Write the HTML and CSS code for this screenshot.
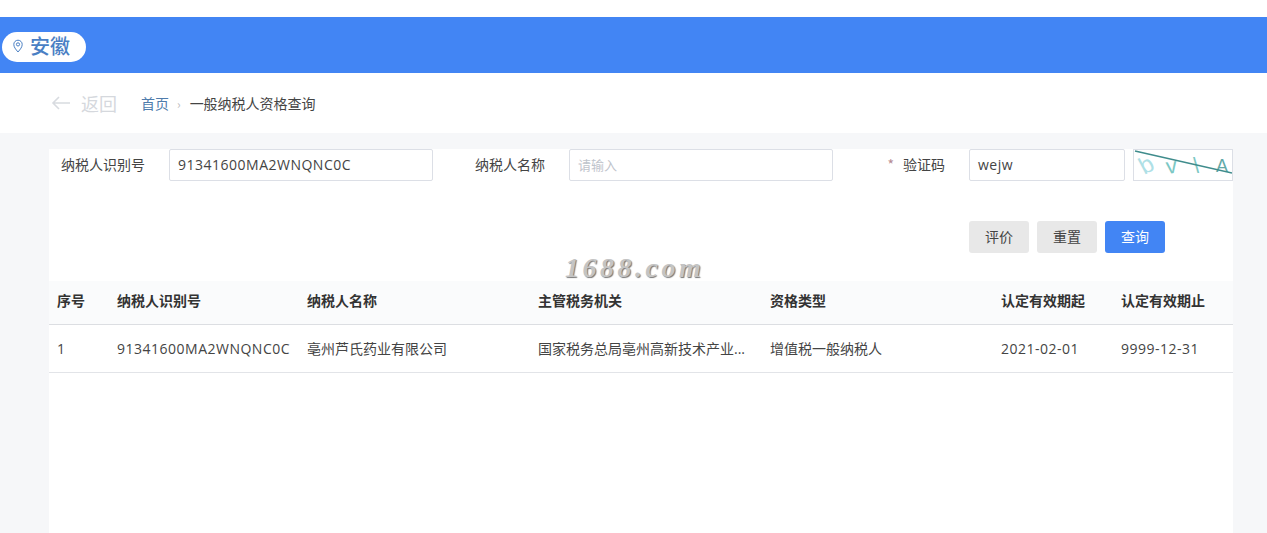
FILE: index.html
```html
<!DOCTYPE html>
<html>
<head>
  <title>一般纳税人资格查询</title>
  <meta charset="utf-8" />
  <link rel="stylesheet" href="styles.css">
</head>
<body>
<div class="header">
  <div class="region">
    <svg class="pin" width="12" height="14" viewBox="0 0 12 14" fill="none" stroke="#4a7fc4" stroke-width="1">
      <path d="M6 13C3.6 10.2 1.8 8 1.8 5.4a4.2 4.2 0 0 1 8.4 0C10.2 8 8.4 10.2 6 13z"/>
      <circle cx="6" cy="5.4" r="1.6"/>
    </svg>
    <span>安徽</span>
  </div>
</div>
<div class="crumbs">
  <div class="back">
    <svg width="20" height="14" viewBox="0 0 20 14" fill="none" stroke="#d8dbe0" stroke-width="1.6">
      <path d="M19 7H2M8 1L2 7l6 6"/>
    </svg>
    <span>返回</span>
  </div>
  <a class="home">首页</a>
  <span class="sep">›</span>
  <span class="current">一般纳税人资格查询</span>
</div>
<div class="page">
  <div class="panel">
    <div class="form">
      <label class="lbl lbl-first">纳税人识别号</label>
      <div class="input">91341600MA2WNQNC0C</div>
      <label class="lbl lbl-second">纳税人名称</label>
      <div class="input placeholder">请输入</div>
      <label class="lbl lbl-third"><em>*</em>验证码</label>
      <div class="input">wejw</div>
      <div class="captcha">
        <svg width="98" height="30" viewBox="0 0 98 30">
          <text x="6" y="22" class="cap cap-a" transform="rotate(-28 14 15)">b</text>
          <text x="32" y="23" class="cap cap-b" transform="rotate(-8 39 16)">v</text>
          <text x="59" y="23" class="cap cap-b">\</text>
          <text x="82" y="22" class="cap cap-c">A</text>
          <path d="M1 1L98 23" stroke="#3f8c8c" stroke-width="1.6" fill="none"/>
        </svg>
      </div>
    </div>
    <div class="actions">
      <button class="btn">评价</button>
      <button class="btn">重置</button>
      <button class="btn primary">查询</button>
    </div>
    <table class="grid">
      <colgroup>
        <col class="c1"><col class="c2"><col class="c3"><col class="c4"><col class="c5"><col class="c6"><col class="c7">
      </colgroup>
      <thead>
        <tr><th>序号</th><th>纳税人识别号</th><th>纳税人名称</th><th>主管税务机关</th><th>资格类型</th><th>认定有效期起</th><th>认定有效期止</th></tr>
      </thead>
      <tbody>
        <tr><td>1</td><td class="num">91341600MA2WNQNC0C</td><td>亳州芦氏药业有限公司</td><td>国家税务总局亳州高新技术产业...</td><td>增值税一般纳税人</td><td class="num">2021-02-01</td><td class="num">9999-12-31</td></tr>
      </tbody>
    </table>
    <div class="mark">1688.com</div>
  </div>
</div>
</body>
</html>
```

FILE: styles.css
```css
html, body {
  height: 100%;
}

body {
  margin: 0;
  padding-top: 17px;
  box-sizing: border-box;
  background: #fff;
  color: #333;
  font-family: "Noto Sans CJK SC", "Open Sans", sans-serif;
  font-size: 14px;
  display: flex;
  flex-direction: column;
  overflow: hidden;
}

.header {
  height: 56px;
  background: #4285f4;
  display: flex;
  align-items: center;
  padding: 3px 0 0 2px;
  box-sizing: border-box;
}

.region {
  width: 84px;
  height: 30px;
  background: #fff;
  border-radius: 15px;
  display: flex;
  align-items: center;
  padding: 0 0 2px 10px;
  box-sizing: border-box;
  color: #4a7fc4;
  font-size: 20px;
  font-weight: 500;
}

.pin {
  margin-right: 6px;
}

.crumbs {
  height: 60px;
  display: flex;
  align-items: center;
  padding-left: 51px;
}

.back {
  display: flex;
  align-items: center;
  gap: 10px;
  color: #d5d8dd;
  font-size: 18px;
  width: 90px;
}

.home {
  color: #4f7cac;
}

.sep {
  color: #bbb;
  margin: 0 9px 0 8px;
  font-size: 12px;
}

.current {
  color: #444;
}

.page {
  flex: 1;
  background: #f6f7f9;
  padding: 16px 34px 0 49px;
}

.panel {
  position: relative;
  background: #fff;
  height: 100%;
}

.form {
  display: grid;
  grid-template-columns: 120px 264px 42px 94px 264px 56px 80px 156px 8px 100px;
  height: 32px;
  align-items: center;
}

.lbl {
  white-space: nowrap;
  color: #444;
  padding-bottom: 2px;
}

.lbl-first {
  padding-left: 12px;
}

.lbl-second {
  grid-column: 4;
}

.lbl-third {
  grid-column: 6 / 8;
  text-align: right;
  padding-right: 24px;
}

.lbl-third em {
  color: #b58a92;
  font-style: normal;
  margin-right: 9px;
}

.input {
  height: 32px;
  box-sizing: border-box;
  border: 1px solid #dcdfe6;
  border-radius: 2px;
  padding: 0 8px;
  line-height: 29px;
  font-size: 14px;
  letter-spacing: .5px;
  color: #444;
  font-family: "Open Sans", "Noto Sans CJK SC", sans-serif;
}

.input.placeholder {
  color: #bfc4cc;
  font-size: 13px;
  letter-spacing: 0;
  font-family: "Noto Sans CJK SC", sans-serif;
}

.captcha {
  grid-column: 10;
  height: 32px;
  box-sizing: border-box;
  border: 1px solid #dcdfe6;
  overflow: hidden;
}

.captcha svg {
  display: block;
}

.cap {
  font-family: "Liberation Sans", sans-serif;
  font-size: 24px;
}

.cap-a {
  fill: #aee0e6;
}

.cap-b {
  fill: #7cc8c4;
  font-size: 22px;
}

.cap-c {
  fill: #62a9a8;
  font-size: 18px;
}

.actions {
  display: flex;
  gap: 8px;
  padding: 40px 0 28px 920px;
}

.btn {
  width: 60px;
  height: 32px;
  border: 0;
  border-radius: 3px;
  background: #e8e8e8;
  color: #444;
  font-family: inherit;
  font-size: 14px;
  padding: 0 0 2px;
}

.btn.primary {
  background: #4285f4;
  color: #fff;
}

.grid {
  width: 100%;
  border-collapse: collapse;
  table-layout: fixed;
}

.c1 { width: 60px; }
.c2 { width: 190px; }
.c3 { width: 231px; }
.c4 { width: 232px; }
.c5 { width: 231px; }
.c6 { width: 120px; }

.grid th {
  height: 43px;
  padding: 0 8px 5px;
  background: #fafbfc;
  text-align: left;
  font-size: 14px;
  font-weight: 700;
  color: #333;
  border-bottom: 1px solid #dcdee2;
  box-sizing: border-box;
  white-space: nowrap;
}

.grid td {
  height: 48px;
  padding: 0 8px;
  font-size: 14px;
  color: #444;
  border-bottom: 1px solid #e2e4e8;
  box-sizing: border-box;
  white-space: nowrap;
  font-family: "Open Sans", "Noto Sans CJK SC", sans-serif;
}

.grid td.num {
  letter-spacing: .5px;
}

.mark {
  position: absolute;
  left: 516px;
  top: 103px;
  font-family: "Liberation Serif", serif;
  font-style: italic;
  font-weight: 700;
  font-size: 28px;
  letter-spacing: 3.5px;
  color: #c4c4c4;
  text-shadow: 1px 1px 1px #777;
}
```
